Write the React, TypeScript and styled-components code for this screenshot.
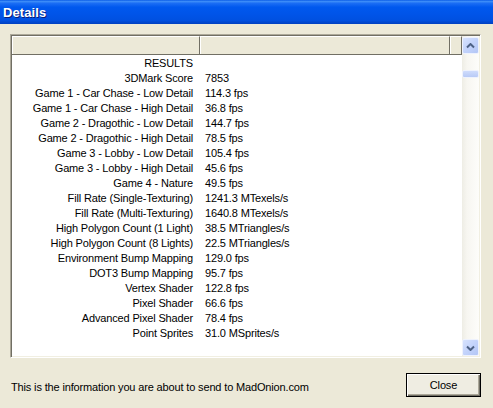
import React from "react";
import styled, { createGlobalStyle } from "styled-components";

const GlobalStyle = createGlobalStyle`
  html, body { margin: 0; padding: 0; background: #ECE9D8; }
  body { font-family: "Liberation Sans", Arial, sans-serif; font-size: 11px; color: #000; }
`;

const Window = styled.div`
  width: 493px;
  height: 408px;
  display: flex;
  flex-direction: column;
  background: #ECE9D8;
  overflow: hidden;
`;

const TitleBar = styled.div`
  height: 24px;
  flex: none;
  display: flex;
  align-items: center;
  padding-left: 3px;
  box-sizing: border-box;
  background: linear-gradient(
    to bottom,
    #0A5CE6 0%,
    #3C8CF8 6%,
    #1A6DF4 14%,
    #0058EE 30%,
    #0054E8 60%,
    #0050E0 85%,
    #0040C0 100%
  );
`;

const Title = styled.span`
  font-family: "Liberation Sans", Arial, sans-serif;
  font-weight: bold;
  font-size: 13px;
  color: #fff;
  text-shadow: 1px 1px 0 #0A1E78;
  letter-spacing: 0.1px;
`;

const Body = styled.div`
  flex: 1;
  display: flex;
  flex-direction: column;
  padding: 10px 12px 11px 10px;
`;

const ListFrame = styled.div`
  width: 471px;
  height: 324px;
  box-sizing: border-box;
  display: flex;
  border-style: solid;
  border-width: 1px;
  border-color: #ACA899 #FFFFFF #FFFFFF #ACA899;
  box-shadow: inset 1px 1px 0 #716F64, inset -1px -1px 0 #F1EFE2;
  padding: 1px;
  background: #fff;
`;

const ListMain = styled.div`
  flex: 1;
  display: flex;
  flex-direction: column;
  background: #fff;
  overflow: hidden;
`;

const HeaderRow = styled.div`
  height: 19px;
  flex: none;
  display: flex;
  box-sizing: border-box;
  border-bottom: 1px solid #716F64;
  background: #ECE9D8;
`;

const HeaderCell = styled.div<{ $w: number }>`
  width: ${(p) => p.$w}px;
  flex: none;
  box-sizing: border-box;
  border-top: 1px solid #fff;
  border-left: 1px solid #fff;
  border-right: 1px solid #716F64;
  height: 18px;
`;

const Rows = styled.div`
  display: flex;
  flex-direction: column;
`;

const Row = styled.div`
  height: 15px;
  display: flex;
  align-items: center;
  white-space: nowrap;
  letter-spacing: -0.15px;
`;

const Label = styled.div`
  width: 188px;
  flex: none;
  box-sizing: border-box;
  text-align: right;
  padding-right: 7px;
`;

const Value = styled.div`
  padding-left: 5px;
`;

const ScrollBar = styled.div`
  width: 17px;
  flex: none;
  display: flex;
  flex-direction: column;
  background: linear-gradient(to right, #EEEDE5 0%, #F7F6F1 30%, #FDFDFA 100%);
`;

const ScrollButton = styled.div`
  width: 17px;
  height: 17px;
  flex: none;
  box-sizing: border-box;
  border: 1px solid #EEF2FD;
  border-radius: 2px;
  background: linear-gradient(to bottom right, #D7E2FD 0%, #C3D3FB 50%, #B3C6F5 100%);
  display: flex;
  align-items: center;
  justify-content: center;
  margin-top: ${(p: { $top?: boolean }) => (p.$top ? "1px" : "0")};
`;

const Track = styled.div`
  flex: 1;
  display: flex;
  flex-direction: column;
  padding-top: 16px;
`;

const Thumb = styled.div`
  width: 17px;
  height: 8px;
  box-sizing: border-box;
  border: 1px solid #EEF2FD;
  border-radius: 2px;
  background: linear-gradient(to bottom, #CFDCFC, #B8CAF6);
`;

const Footer = styled.div`
  margin-top: 15px;
  height: 24px;
  display: flex;
  align-items: center;
  justify-content: space-between;
`;

const FooterText = styled.span`
  padding-left: 1px;
  padding-top: 4px;
  letter-spacing: -0.15px;
`;

const CloseButton = styled.button`
  width: 75px;
  height: 24px;
  box-sizing: border-box;
  border: 1px solid #000;
  border-radius: 0;
  background: #EFEDE2;
  box-shadow: inset 1px 1px 0 #fff, inset -1px -1px 0 #716F64, inset -2px -2px 0 #ACA899;
  font-family: "Liberation Sans", Arial, sans-serif;
  font-size: 11px;
  color: #000;
  padding: 0;
  letter-spacing: -0.15px;
`;

const Arrow = ({ down }: { down?: boolean }) => (
  <svg width="9" height="6" viewBox="0 0 9 6">
    <path
      d={down ? "M1 1.5 L4.5 5 L8 1.5" : "M1 4.5 L4.5 1 L8 4.5"}
      fill="none"
      stroke="#4D6185"
      strokeWidth="2"
    />
  </svg>
);

const rows: [string, string][] = [
  ["RESULTS", ""],
  ["3DMark Score", "7853"],
  ["Game 1 - Car Chase - Low Detail", "114.3 fps"],
  ["Game 1 - Car Chase - High Detail", "36.8 fps"],
  ["Game 2 - Dragothic - Low Detail", "144.7 fps"],
  ["Game 2 - Dragothic - High Detail", "78.5 fps"],
  ["Game 3 - Lobby - Low Detail", "105.4 fps"],
  ["Game 3 - Lobby - High Detail", "45.6 fps"],
  ["Game 4 - Nature", "49.5 fps"],
  ["Fill Rate (Single-Texturing)", "1241.3 MTexels/s"],
  ["Fill Rate (Multi-Texturing)", "1640.8 MTexels/s"],
  ["High Polygon Count (1 Light)", "38.5 MTriangles/s"],
  ["High Polygon Count (8 Lights)", "22.5 MTriangles/s"],
  ["Environment Bump Mapping", "129.0 fps"],
  ["DOT3 Bump Mapping", "95.7 fps"],
  ["Vertex Shader", "122.8 fps"],
  ["Pixel Shader", "66.6 fps"],
  ["Advanced Pixel Shader", "78.4 fps"],
  ["Point Sprites", "31.0 MSprites/s"],
];

export default function App() {
  return (
    <>
      <GlobalStyle />
      <Window>
        <TitleBar>
          <Title>Details</Title>
        </TitleBar>
        <Body>
          <ListFrame>
            <ListMain>
              <HeaderRow>
                <HeaderCell $w={188} />
                <HeaderCell $w={250} />
                <HeaderCell $w={12} />
              </HeaderRow>
              <Rows>
                {rows.map(([l, v]) => (
                  <Row key={l}>
                    <Label>{l}</Label>
                    <Value>{v}</Value>
                  </Row>
                ))}
              </Rows>
            </ListMain>
            <ScrollBar>
              <ScrollButton $top>
                <Arrow />
              </ScrollButton>
              <Track>
                <Thumb />
              </Track>
              <ScrollButton>
                <Arrow down />
              </ScrollButton>
            </ScrollBar>
          </ListFrame>
          <Footer>
            <FooterText>This is the information you are about to send to MadOnion.com</FooterText>
            <CloseButton>Close</CloseButton>
          </Footer>
        </Body>
      </Window>
    </>
  );
}
